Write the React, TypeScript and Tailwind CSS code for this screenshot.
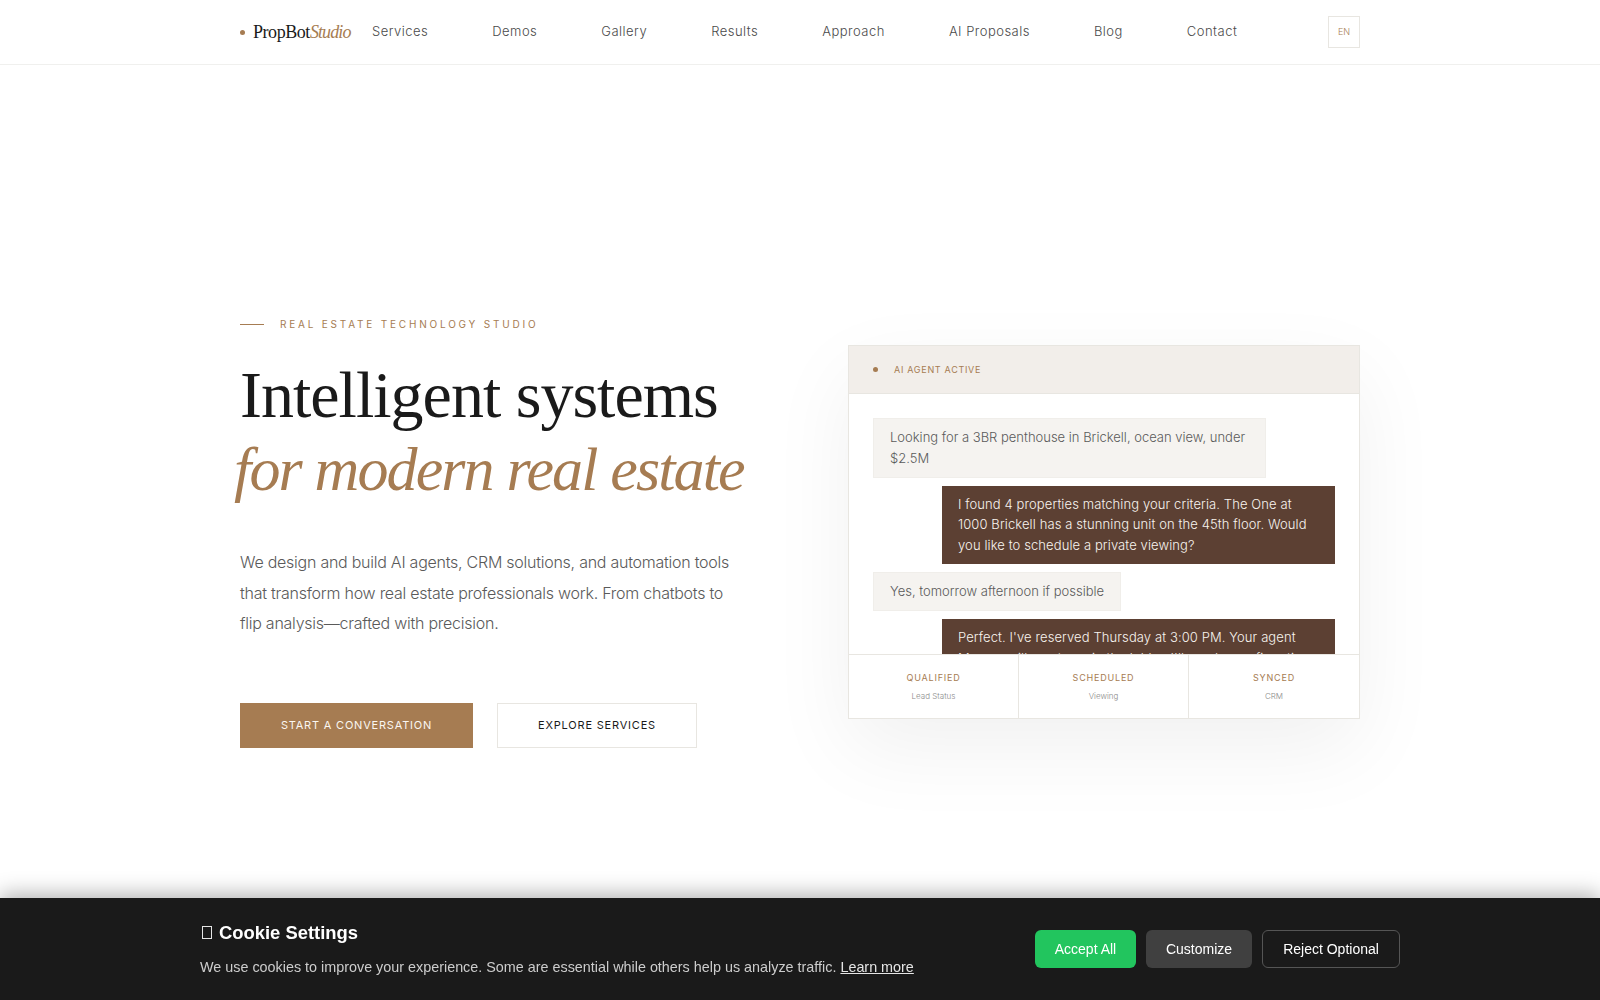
const SANS = "font-['Inter',sans-serif]";
const SERIF = "font-['Liberation_Serif',serif]";

const NAV_LINKS = ['Services', 'Demos', 'Gallery', 'Results', 'Approach', 'AI Proposals', 'Blog', 'Contact'];

const STATS = [
  { value: 'QUALIFIED', label: 'Lead Status' },
  { value: 'SCHEDULED', label: 'Viewing' },
  { value: 'SYNCED', label: 'CRM' },
];

function Nav() {
  return (
    <nav className="h-[65px] border-b border-[#f0f0ee] bg-white">
      <div className="mx-auto flex h-full w-[1120px] items-center">
        <div className={`${SERIF} flex w-[132px] shrink-0 items-center text-[18px] text-[#1a1a1a]`}>
          <span className="mr-2 h-[5px] w-[5px] rounded-full bg-[#a67c52]" />
          <span className="tracking-[-0.45px]">PropBot</span>
          <span className="italic tracking-[-0.9px] text-[#a67c52]">Studio</span>
        </div>
        <div className={`${SANS} flex shrink-0 items-center gap-16 text-[13px] font-light tracking-[0.48px] text-[#4a4a4a]`}>
          {NAV_LINKS.map((link) => (
            <a key={link}>{link}</a>
          ))}
        </div>
        <button className={`${SANS} ml-auto flex h-[32px] w-[32px] items-center justify-center border border-[#e8e6e1] text-[9px] font-light text-[#a67c52]`}>
          EN
        </button>
      </div>
    </nav>
  );
}

function Hero() {
  return (
    <div className="w-[512px] shrink-0">
      <div className="flex items-center gap-4">
        <span className="h-px w-6 bg-[#a67c52]" />
        <span className={`${SANS} text-[10px] tracking-[2.8px] text-[#a67c52]`}>REAL ESTATE TECHNOLOGY STUDIO</span>
      </div>
      <h1 className={`${SERIF} mt-[26px] whitespace-nowrap text-[66px] leading-[73px] font-normal tracking-[-1px] text-[#1a1a1a]`}>
        Intelligent systems
        <br />
        <em className="-ml-[6px] inline-block text-[62px] tracking-[-1.85px] text-[#a67c52]">for modern real estate</em>
      </h1>
      <p className={`${SANS} mt-[41px] w-[500px] text-[16px] leading-[30.6px] font-light tracking-[-0.25px] text-[#5a5a5a]`}>
        We design and build AI agents, CRM solutions, and automation tools that transform how real estate professionals work. From chatbots to flip analysis—crafted with precision.
      </p>
      <div className={`${SANS} mt-[64px] flex gap-6 text-[11px] tracking-[0.8px]`}>
        <button className="flex h-[45px] w-[233px] items-center justify-center bg-[#a67c52] text-[#fbf7f1]">START A CONVERSATION</button>
        <button className="flex h-[45px] w-[200px] items-center justify-center border border-[#e8e6e1] text-[#1a1a1a]">EXPLORE SERVICES</button>
      </div>
    </div>
  );
}

function UserBubble({ text }: { text: string }) {
  return (
    <div className="w-fit max-w-[393px] border border-[#f0eeea] bg-[#f5f3f0] px-4 py-2 text-[#5a5a5a]">{text}</div>
  );
}

function AgentBubble({ text }: { text: string }) {
  return <div className="ml-auto w-[393px] shrink-0 bg-[#5c4033] px-4 py-2 tracking-[0.1px] text-[#f8f4ef]">{text}</div>;
}

function ChatCard() {
  return (
    <div className={`${SANS} mb-[1px] flex h-[374px] w-[512px] shrink-0 flex-col border border-[#e8e6e1] bg-white shadow-[0_30px_80px_rgba(0,0,0,0.06)]`}>
      <div className="flex h-[48px] shrink-0 items-center gap-4 border-b border-[#e8e6e1] bg-[#f2eeea] px-6">
        <span className="h-[5px] w-[5px] rounded-full bg-[#a67c52]" />
        <span className="text-[9px] tracking-[0.7px] text-[#a67c52]">AI AGENT ACTIVE</span>
      </div>
      <div className="flex h-[260px] flex-col gap-2 overflow-hidden p-6 text-[13px] leading-[20.8px] font-light">
        <UserBubble text="Looking for a 3BR penthouse in Brickell, ocean view, under $2.5M" />
        <AgentBubble text="I found 4 properties matching your criteria. The One at 1000 Brickell has a stunning unit on the 45th floor. Would you like to schedule a private viewing?" />
        <UserBubble text="Yes, tomorrow afternoon if possible" />
        <AgentBubble text="Perfect. I've reserved Thursday at 3:00 PM. Your agent Marcus will meet you in the lobby. I'll send a confirmation shortly." />
      </div>
      <div className="grid flex-1 grid-cols-3 border-t border-[#e8e6e1] bg-white">
        {STATS.map((stat, i) => (
          <div key={stat.value} className={`flex flex-col items-center justify-center gap-[5px] ${i < 2 ? 'border-r border-[#e8e6e1]' : ''}`}>
            <span className="text-[9px] tracking-[0.8px] text-[#a67c52]">{stat.value}</span>
            <span className="text-[8px] font-light text-[#8a8a8a]">{stat.label}</span>
          </div>
        ))}
      </div>
    </div>
  );
}

function CookieBanner() {
  return (
    <div className="fixed inset-x-0 bottom-0 h-[102px] bg-[#1a1a1a] font-['Liberation_Sans',sans-serif] shadow-[0_-4px_20px_rgba(0,0,0,0.3)]">
      <div className="mx-auto flex h-full w-[1200px] items-center justify-between">
        <div>
          <h3 className="flex items-center text-[18.4px] leading-[24px] font-bold text-white">
            {/* the emoji has no glyph in the reference, it shows as an empty box */}
            <span className="mr-[7px] ml-[2px] h-[13px] w-[10px] border border-[#e5e5e5]" />
            Cookie Settings
          </h3>
          <p className="mt-[11px] text-[14.36px] leading-[22px] text-[#cccccc]">
            We use cookies to improve your experience. Some are essential while others help us analyze traffic.{' '}
            <a className="text-[#e5e5e5] underline">Learn more</a>
          </p>
        </div>
        <div className="flex gap-[10px] text-[14px] text-white">
          <button className="h-[38px] w-[101px] rounded-md bg-[#22c55e]">Accept All</button>
          <button className="h-[38px] w-[106px] rounded-md bg-[#404040]">Customize</button>
          <button className="h-[38px] w-[138px] rounded-md border border-[#555555]">Reject Optional</button>
        </div>
      </div>
    </div>
  );
}

export default function App() {
  return (
    <div className="h-screen overflow-hidden bg-white">
      <Nav />
      <main className="mx-auto flex h-[935px] w-[1120px] items-center justify-between">
        <Hero />
        <ChatCard />
      </main>
      <CookieBanner />
    </div>
  );
}
